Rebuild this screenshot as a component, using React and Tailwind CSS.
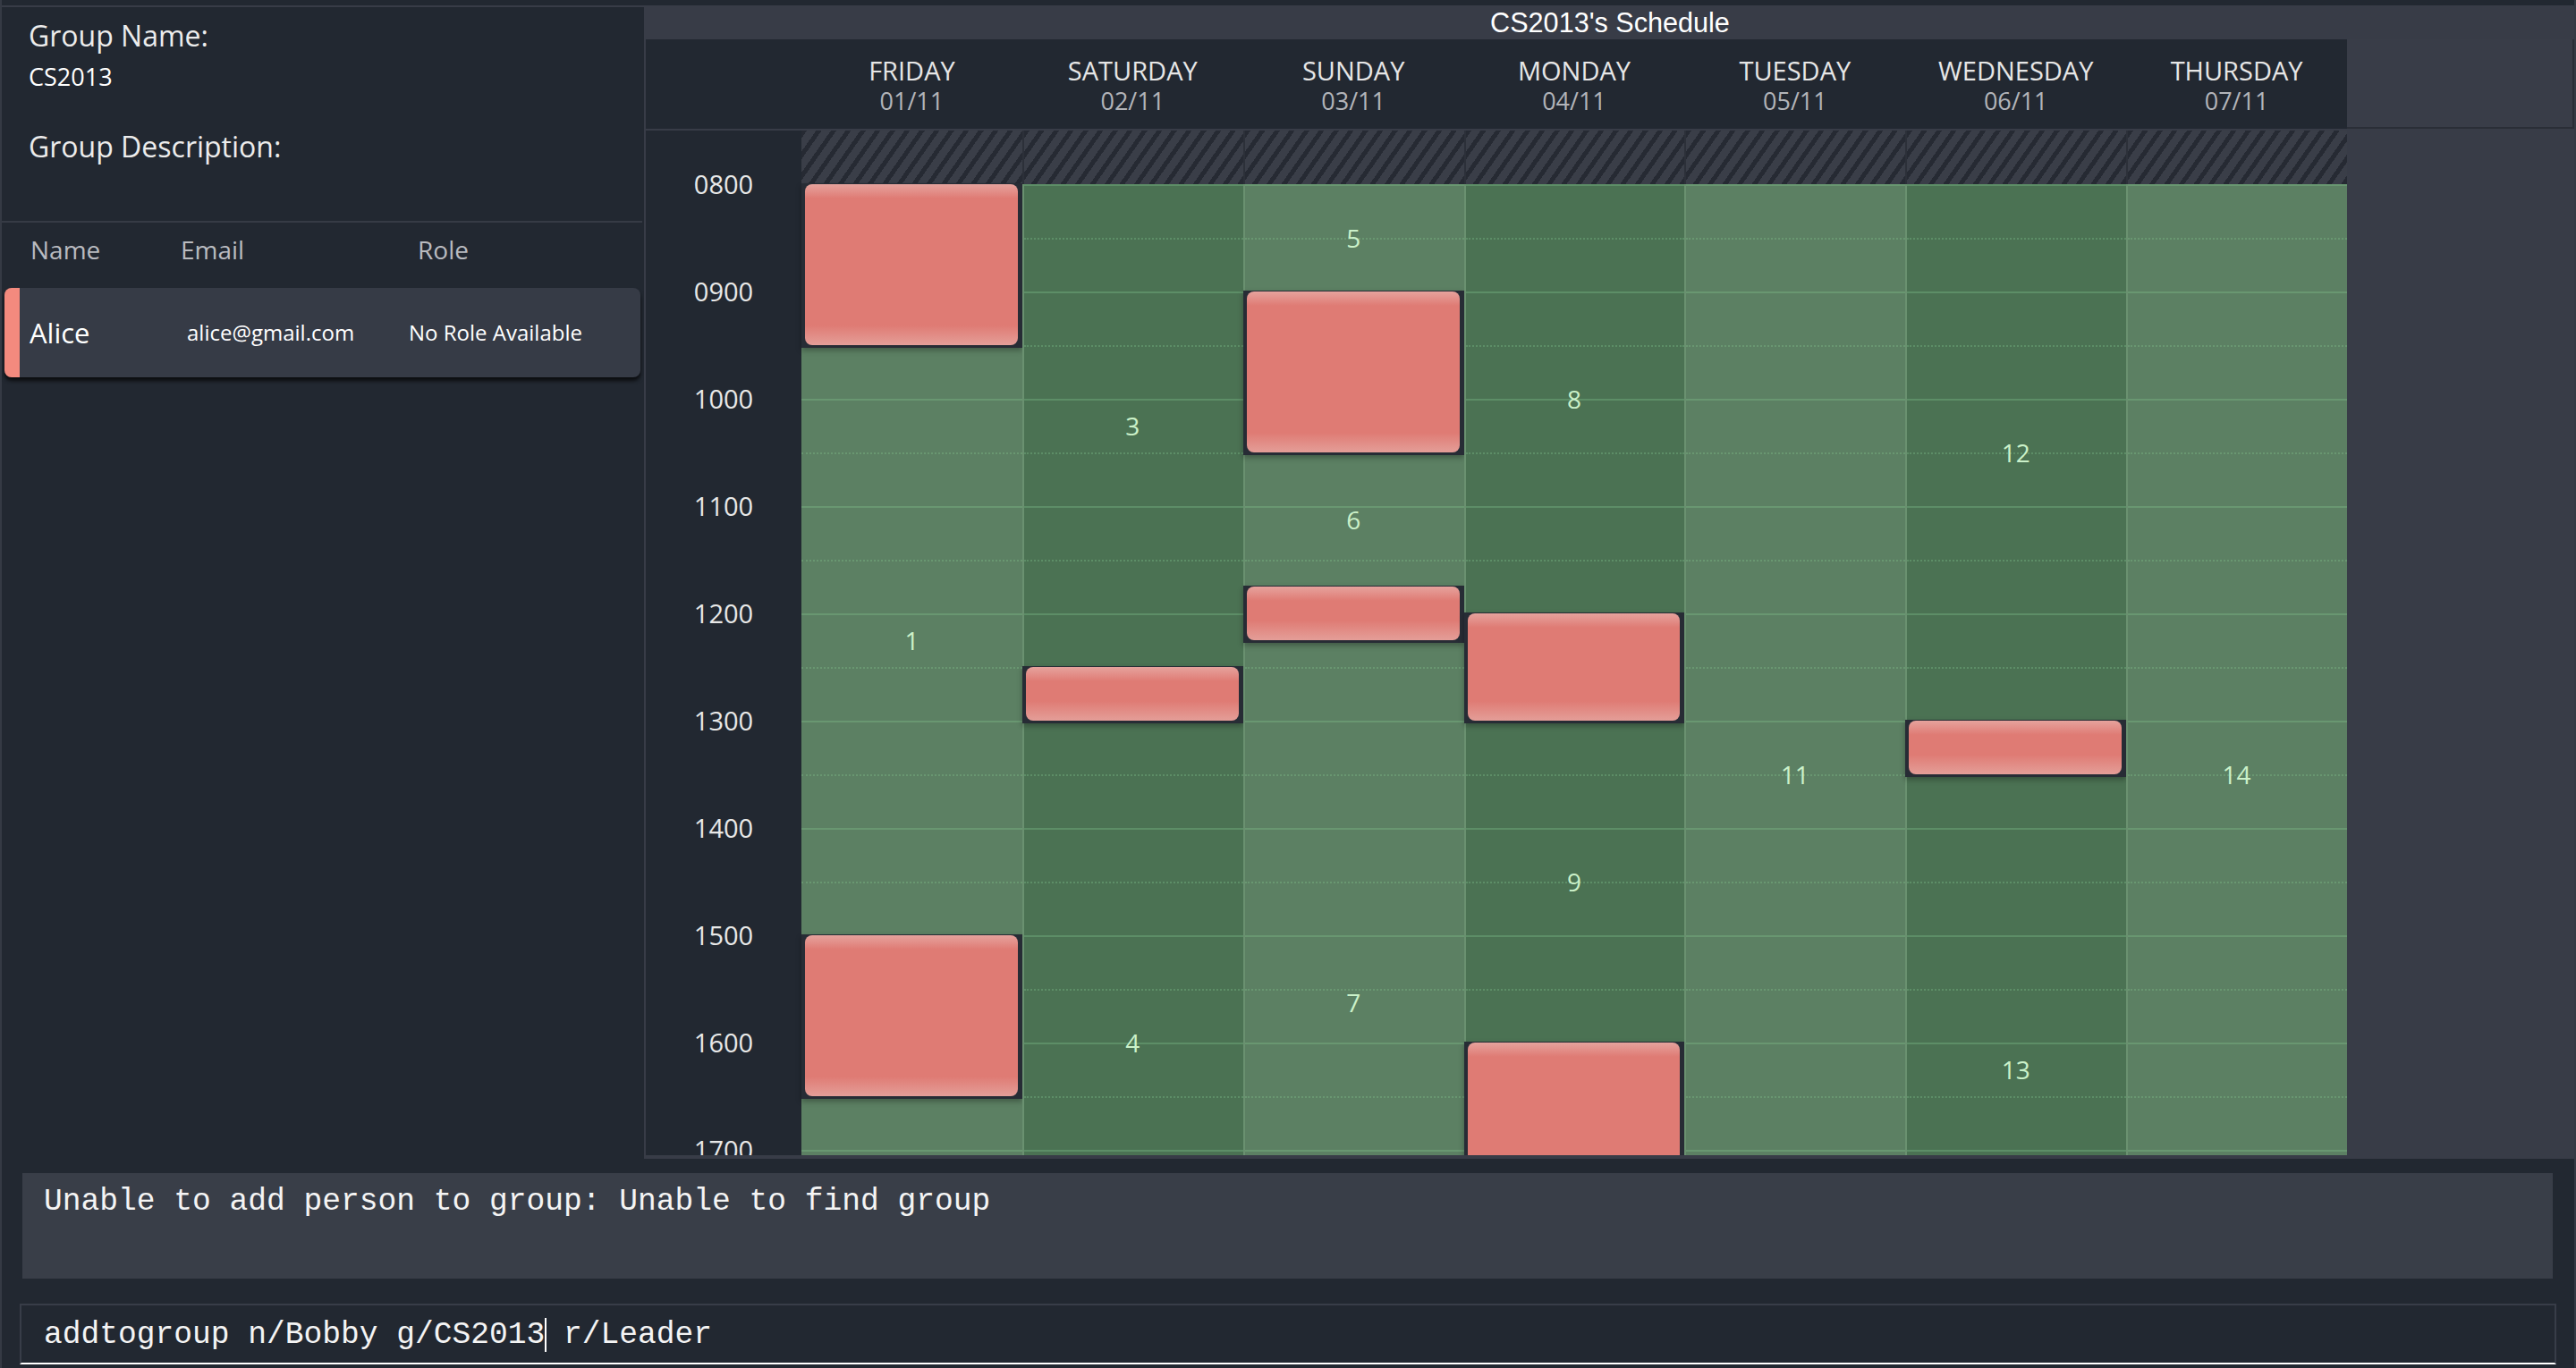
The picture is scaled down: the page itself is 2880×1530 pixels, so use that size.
import React from 'react';

const HOUR = 120;

const days = [
  { name: 'FRIDAY', date: '01/11', light: true, busy: [[0, 1.5], [7, 8.5]], free: [['1', 1.5, 7]] },
  { name: 'SATURDAY', date: '02/11', light: false, busy: [[4.5, 5]], free: [['3', 0, 4.5], ['4', 5, 11]] },
  { name: 'SUNDAY', date: '03/11', light: true, busy: [[1, 2.5], [3.75, 4.25]], free: [['5', 0, 1], ['6', 2.5, 3.75], ['7', 4.25, 11]] },
  { name: 'MONDAY', date: '04/11', light: false, busy: [[4, 5], [8, 9.5]], free: [['8', 0, 4], ['9', 5, 8]] },
  { name: 'TUESDAY', date: '05/11', light: true, busy: [], free: [['11', 0, 11]] },
  { name: 'WEDNESDAY', date: '06/11', light: false, busy: [[5, 5.5]], free: [['12', 0, 5], ['13', 5.5, 11]] },
  { name: 'THURSDAY', date: '07/11', light: true, busy: [], free: [['14', 0, 11]] },
];

const times = ['0800', '0900', '1000', '1100', '1200', '1300', '1400', '1500', '1600', '1700'];

function DayColumn({ d, idx }) {
  const rows = Array.from({ length: 22 }, (_, i) => i);
  return (
    <div className="flex flex-col min-w-0">
      <div
        className={`h-[60px] bg-[repeating-linear-gradient(125deg,#262a33_0px,#262a33_5px,#3a3e48_5px,#3a3e48_13.5px)] ${
          idx > 0 ? 'border-l-2 border-[#2c3039]' : ''
        }`}
      />
      <div className={`relative flex ${d.light ? 'bg-[#5c8063]' : 'bg-[#4b7253]'}`}>
        {idx > 0 && <div className="w-[2px] bg-[#6a9170]" />}
        <div className="flex-1 flex flex-col">
          {rows.map((i) => (
            <div
              key={i}
              className={`h-[60px] border-t-2 border-[#82c48d]/35 ${i % 2 === 0 ? 'border-solid' : 'border-dotted'}`}
            />
          ))}
        </div>
        {d.free.map(([label, a, b]) => (
          <div
            key={label}
            className="absolute inset-x-0 flex items-center justify-center text-[28px] text-[#cbf1c9]"
            style={{ top: a * HOUR, height: (b - a) * HOUR }}
          >
            {label}
          </div>
        ))}
        {d.busy.map(([a, b], i) => (
          <div
            key={i}
            className="absolute inset-x-0 bg-[#272c35] pt-[1px] pl-[4px] pr-[5px] pb-[3px] shadow-[0_3px_6px_rgba(0,0,0,0.3)]"
            style={{ top: a * HOUR - 1, height: (b - a) * HOUR + 4 }}
          >
            <div className="h-full rounded-[8px] bg-[linear-gradient(to_bottom,#e6a39d_0px,#df7b74_16px,#df7b74_calc(100%_-_22px),#e49e98_100%)]" />
          </div>
        ))}
      </div>
    </div>
  );
}

function Sidebar() {
  return (
    <div className="w-[718px] flex flex-col font-['Open_Sans',sans-serif]">
      <div className="pl-[30px] pt-[10px]">
        <div className="text-[32px] leading-[44px] text-[#ececec]">Group Name:</div>
        <div className="mt-[6px] text-[27px] leading-[36px] text-white">CS2013</div>
        <div className="mt-[38px] text-[32px] leading-[44px] text-[#ececec]">Group Description:</div>
      </div>
      <div className="mt-[61px] h-[2px] mr-[2px] bg-[#363b45]" />
      <div className="mt-[10px] h-[40px] pl-[32px] grid grid-cols-[168px_265px_1fr] items-center text-[28px] leading-[40px] text-[#b9bbc0]">
        <span>Name</span>
        <span>Email</span>
        <span>Role</span>
      </div>
      <div className="mt-[23px] ml-[3px] mr-[4px] h-[100px] flex rounded-[8px] overflow-hidden bg-[#363b46] shadow-[0_4px_4px_rgba(0,0,0,0.7)]">
        <div className="w-[17px] bg-[#f38a7e]" />
        <div className="flex-1 pl-[11px] grid grid-cols-[176px_248px_1fr] items-center text-white">
          <span className="text-[31px]">Alice</span>
          <span className="text-[24px]">alice@gmail.com</span>
          <span className="text-[24px]">No Role Available</span>
        </div>
      </div>
    </div>
  );
}

function Schedule() {
  return (
    <div className="flex-1 flex flex-col bg-[#383c47] pl-[2px] pb-[4px] min-w-0">
      <div className="h-[36px] pb-[2px] flex items-center justify-center text-[30.6px] leading-[34px] text-white font-['Liberation_Sans',Arial,sans-serif]">
        CS2013's Schedule
      </div>
      <div className="h-[100px] grid grid-cols-[174px_repeat(7,minmax(0,1fr))_254px] font-['Open_Sans',sans-serif]">
        <div className="bg-[#222831]" />
        {days.map((d) => (
          <div key={d.name} className="bg-[#222831] flex flex-col items-center pt-[18px] leading-[34px]">
            <span className="text-[29px] text-[#e6e6e6]">{d.name}</span>
            <span className="text-[27px] text-[#b2b4b9]">{d.date}</span>
          </div>
        ))}
        <div className="bg-[#393d48] border-r-2 border-b-2 border-[#2a2e37]" />
      </div>
      <div className="h-[2px]" />
      <div className="h-[1146px] overflow-hidden grid grid-cols-[174px_repeat(7,minmax(0,1fr))_254px] items-start font-['Open_Sans',sans-serif]">
        <div className="bg-[#222831] flex flex-col h-[1380px]">
          {times.map((t) => (
            <div key={t} className="h-[120px] shrink-0 flex items-center justify-center text-[29px] text-[#e8e8e8]">
              {t}
            </div>
          ))}
        </div>
        {days.map((d, idx) => (
          <DayColumn key={d.name} d={d} idx={idx} />
        ))}
        <div />
      </div>
    </div>
  );
}

export default function App() {
  return (
    <div className="w-[2880px] h-[1530px] bg-[#222831] flex flex-col overflow-hidden border-x-2 border-[#353a44]">
      <div className="h-[6px] shrink-0" />
      <div className="h-[1290px] shrink-0 flex border-t-2 border-[#383c47]">
        <Sidebar />
        <Schedule />
      </div>
      <div className="flex-1 flex flex-col pt-[16px] font-['Liberation_Mono','Courier_New',monospace] text-[34.6px] text-[#f4f4f4]">
        <div className="h-[118px] ml-[23px] mr-[24px] bg-[#393e48] pl-[24px] pt-[12px] leading-[40px]">
          Unable to add person to group: Unable to find group
        </div>
        <div className="mt-[28px] h-[68px] ml-[20px] mr-[20px] border-2 border-[#383d48] border-b-white flex items-center pl-[25px] pt-[1px] leading-[40px] whitespace-pre">
          <span>addtogroup n/Bobby g/CS2013</span>
          <span className="inline-block w-[2px] h-[38px] -mr-[2px] bg-white" />
          <span> r/Leader</span>
        </div>
      </div>
    </div>
  );
}
